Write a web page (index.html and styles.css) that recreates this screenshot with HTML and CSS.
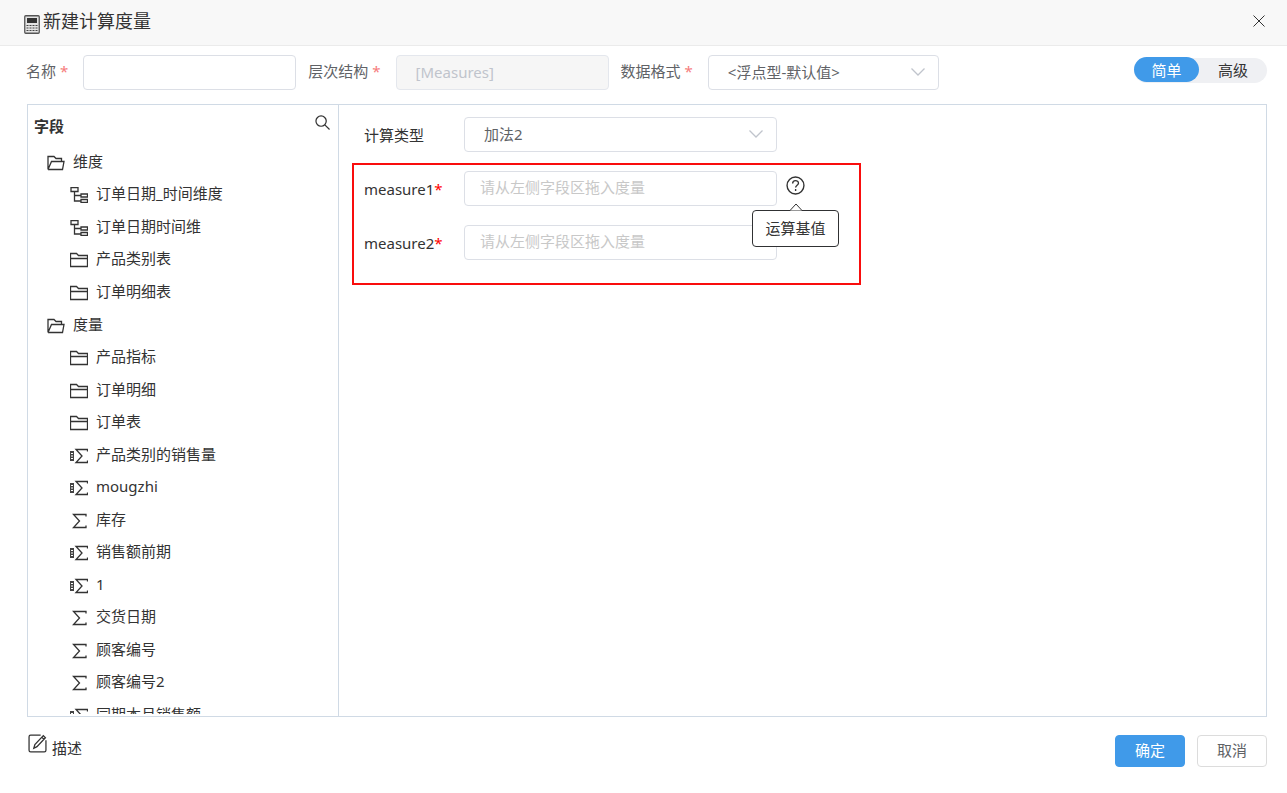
FILE: index.html
```html
<!DOCTYPE html>
<html lang="zh-CN">
<head>
<meta charset="utf-8">
<title>新建计算度量</title>
<link rel="stylesheet" href="styles.css">
</head>
<body>
<svg class="sprite" aria-hidden="true">
  <symbol id="open" viewBox="0 0 18 16"><path d="M1 14.5V1.500h6l2 2H14.500v3M1 14.500h14.500l1.500-8H4.500L1 14.500"/></symbol>
  <symbol id="folder" viewBox="0 0 18 16"><path d="M.5 14.500V1.500h6l2 2h9v11zM.5 6.500h17"/></symbol>
  <symbol id="level" viewBox="0 0 18 16"><path d="M1 .5h7v4H1zM4.500 4.500v9.500h6M4.500 8.500h6M11 7h6.500v3H11zM11 12.500h6.500v3H11z"/></symbol>
  <symbol id="sum" viewBox="0 0 18 16"><path d="M16 3.500v-2H3.500L9.500 8l-6 6.500H16v-2"/></symbol>
  <symbol id="calc-sum" viewBox="0 0 18 16"><path d="M17.500 3.500v-2H6L12 8l-6 6.500h11.500v-2"/><path class="fill" d="M0 3h4v10H0z"/><path class="dots" d="M1 5.500h2M1 8h2M1 10.500h2"/></symbol>
  <symbol id="chevron" viewBox="0 0 14 8"><path d="M.5.500 7 7 13.500.500"/></symbol>
</svg>
<main class="dialog">
  <header class="titlebar">
    <svg class="calculator" viewBox="0 0 16 19" aria-hidden="true"><rect x=".75" y=".75" width="14.500" height="17.500" rx="1" fill="#e4e4e4" stroke="#555" stroke-width="1.300"/><path d="M3 3h10v5H3z" fill="#333" stroke="none"/><path d="M2.500 10.500h11M2.500 13h11M2.500 15.500h11" stroke="#444" stroke-width="1.200" stroke-dasharray="2 1"/></svg>
    <h1 class="title">新建计算度量</h1>
    <button class="close" type="button" aria-label="关闭"><svg viewBox="0 0 12 12"><path d="M.5.500l11 11M11.500.500l-11 11"/></svg></button>
  </header>

  <form class="toolbar">
    <label class="label" for="name">名称<span class="star">*</span></label>
    <input class="control" id="name" type="text">
    <label class="label" for="hierarchy">层次结构<span class="star">*</span></label>
    <input class="control padded" id="hierarchy" type="text" value="[Measures]" disabled>
    <label class="label" for="format">数据格式<span class="star">*</span></label>
    <span class="select format">
      <select class="control padded" id="format"><option>&lt;浮点型-默认值&gt;</option></select>
      <svg class="chevron" aria-hidden="true"><use href="#chevron"/></svg>
    </span>
    <div class="modes">
      <button class="mode active" type="button" aria-pressed="true">简单</button>
      <button class="mode" type="button" aria-pressed="false">高级</button>
    </div>
  </form>

  <div class="workspace">
    <aside class="fields">
      <div class="fields-head">
        <h2 class="fields-title">字段</h2>
        <button class="search" type="button" aria-label="搜索"><svg viewBox="0 0 16 16"><circle cx="6.500" cy="6.500" r="5.500"/><path d="M10.500 10.500l5 5"/></svg></button>
      </div>
      <div class="tree">
        <div class="row root"><svg class="icon"><use href="#open"/></svg>维度</div>
        <ul class="branch">
          <li class="row"><svg class="icon"><use href="#level"/></svg>订单日期_时间维度</li>
          <li class="row"><svg class="icon"><use href="#level"/></svg>订单日期时间维</li>
          <li class="row"><svg class="icon"><use href="#folder"/></svg>产品类别表</li>
          <li class="row"><svg class="icon"><use href="#folder"/></svg>订单明细表</li>
        </ul>
        <div class="row root"><svg class="icon"><use href="#open"/></svg>度量</div>
        <ul class="branch">
          <li class="row"><svg class="icon"><use href="#folder"/></svg>产品指标</li>
          <li class="row"><svg class="icon"><use href="#folder"/></svg>订单明细</li>
          <li class="row"><svg class="icon"><use href="#folder"/></svg>订单表</li>
          <li class="row"><svg class="icon"><use href="#calc-sum"/></svg>产品类别的销售量</li>
          <li class="row"><svg class="icon"><use href="#calc-sum"/></svg>mougzhi</li>
          <li class="row"><svg class="icon"><use href="#sum"/></svg>库存</li>
          <li class="row"><svg class="icon"><use href="#calc-sum"/></svg>销售额前期</li>
          <li class="row"><svg class="icon"><use href="#calc-sum"/></svg>1</li>
          <li class="row"><svg class="icon"><use href="#sum"/></svg>交货日期</li>
          <li class="row"><svg class="icon"><use href="#sum"/></svg>顾客编号</li>
          <li class="row"><svg class="icon"><use href="#sum"/></svg>顾客编号2</li>
          <li class="row"><svg class="icon"><use href="#calc-sum"/></svg>同期本月销售额</li>
        </ul>
      </div>
    </aside>

    <section class="editor">
      <div class="field type-field">
        <label class="field-label" for="type">计算类型</label>
        <span class="select">
          <select class="control padded" id="type"><option>加法2</option></select>
          <svg class="chevron" aria-hidden="true"><use href="#chevron"/></svg>
        </span>
      </div>
      <div class="measures">
        <div class="field">
          <label class="field-label" for="measure1">measure1<span class="required">*</span></label>
          <input class="control measure" id="measure1" type="text" placeholder="请从左侧字段区拖入度量">
          <div class="help">
            <button class="help-button" type="button" aria-label="帮助" aria-describedby="tip"><svg viewBox="0 0 18 18"><circle cx="9" cy="9" r="8"/><path d="M6.300 7.100c0-3.700 5.500-3.500 5.500-.3 0 2-2.700 2-2.700 4.200M9.100 12.400v1.700"/></svg></button>
            <div class="tooltip" id="tip" role="tooltip">运算基值<svg class="arrow" viewBox="0 0 14 8"><path d="M1 7.500 7 1l6 6.500"/></svg></div>
          </div>
        </div>
        <div class="field">
          <label class="field-label" for="measure2">measure2<span class="required">*</span></label>
          <input class="control measure" id="measure2" type="text" placeholder="请从左侧字段区拖入度量">
        </div>
      </div>
    </section>
  </div>

  <footer class="footer">
    <button class="describe" type="button"><svg viewBox="0 0 18 18"><path d="M12 1H2.500A1.500 1.500 0 0 0 1 2.500v13A1.500 1.500 0 0 0 2.500 17h13a1.500 1.500 0 0 0 1.500-1.500V6M5.500 13.500l1-3.500 8-8.500 2 2-8 8.500zM13 3l2 2"/></svg><span class="describe-text">描述</span></button>
    <button class="button primary" type="button">确定</button>
    <button class="button" type="button">取消</button>
  </footer>
</main>
</body>
</html>
```
FILE: styles.css
```css
* { box-sizing: border-box; }

body {
  margin: 0;
  background: #fff;
  color: #333;
  font: 15px/20px "Noto Sans", "Noto Sans CJK SC", sans-serif;
}

svg { fill: none; stroke: #333; flex: none; }
button, input, select { font: inherit; color: inherit; }
button { padding: 0; border: 0; background: none; cursor: pointer; }
.sprite { display: none; }

.dialog {
  display: flex;
  flex-direction: column;
  height: 100vh;
  overflow: hidden;
}

.titlebar {
  display: flex;
  align-items: center;
  height: 46px;
  flex: none;
  padding: 0 22px 3px 24px;
  border-bottom: 1px solid #ebebeb;
  background: #f8f8f8;
}
.calculator { width: 16px; height: 19px; margin-top: 6px; }
.title {
  flex: 1;
  margin: 0 0 0 3px;
  font-size: 18px;
  line-height: 24px;
  font-weight: 400;
}
.close { display: flex; }
.close svg { width: 12px; height: 12px; }

.toolbar {
  display: flex;
  flex: none;
  align-items: flex-start;
  padding: 9px 20px 14px 26px;
}
.label {
  padding: 6px 15px 0 0;
  color: #606266;
  white-space: nowrap;
}
.star { margin-left: 4px; color: #f67c7c; }
.control {
  display: block;
  width: 213px;
  height: 35px;
  margin: 0 12px 0 0;
  padding: 0 15px 2px;
  border: 1px solid #dcdfe6;
  border-radius: 4px;
  background: #fff;
  color: #606266;
  outline: 0;
}
.padded { padding: 0 19px 1px; }
.measure { padding-bottom: 3px; }
.control:disabled {
  border-color: #e4e7ed;
  background: #f6f6f6;
  color: #c0c4cc;
}
.control::placeholder { color: #c8c8c8; opacity: 1; }
.select { position: relative; }
.select .control { width: 100%; margin: 0; appearance: none; }
.format { width: 231px; }
.chevron {
  position: absolute;
  top: 13px;
  right: 14px;
  width: 14px;
  height: 8px;
  stroke: #c0c4cc;
  stroke-width: 1.300;
  pointer-events: none;
}

.modes {
  display: flex;
  height: 25px;
  margin: 3px 0 0 auto;
  border-radius: 13px;
  background: #eff0f3;
}
.mode { width: 68px; height: 25px; padding-bottom: 2px; border-radius: 13px; }
.mode.active {
  width: 65px;
  margin-top: -1px;
  padding-bottom: 0;
  background: #409ae9;
  color: #fff;
}

.workspace {
  display: flex;
  flex: 1;
  min-height: 0;
  margin: 0 20px 0 27px;
  border: 1px solid #d0dae5;
}
.fields {
  display: flex;
  flex-direction: column;
  width: 311px;
  flex: none;
  padding-bottom: 2px;
  border-right: 1px solid #d0dae5;
}
.fields-head {
  display: flex;
  flex: none;
  justify-content: space-between;
  height: 39px;
  padding: 10px 8px 0 6px;
}
.fields-title { margin: 0; padding-top: 1px; font-size: 15px; line-height: 20px; font-weight: 700; }
.search { display: flex; align-self: flex-start; }
.search svg { width: 15px; height: 15px; stroke-width: 1.300; }

.tree { flex: 1; min-height: 0; overflow: hidden; }
.branch { margin: 0; padding: 0 0 0 23px; list-style: none; }
.row {
  display: flex;
  align-items: center;
  gap: 8px;
  height: 32px;
  padding-left: 19px;
  white-space: nowrap;
}
.root, .branch .row:nth-child(even) { height: 33px; }
.icon { width: 18px; height: 16px; margin-top: 4px; stroke-width: 1.300; }
.fill { fill: #444; stroke: none; }
.dots { stroke: #fff; stroke-width: 1; }

.editor { flex: 1; min-width: 0; padding: 12px 12px 0 13px; }
.field {
  display: grid;
  grid-template-columns: 100px 313px auto;
  justify-content: start;
}
.field .control { width: 100%; }
.type-field { padding-left: 12px; }
.field-label { padding-top: 8px; }
.required { color: #f00; }
.measures {
  display: grid;
  gap: 19px;
  width: 509px;
  max-width: 100%;
  margin-top: 11px;
  padding: 6px 10px 23px;
  border: 2px solid #f90d0d;
}
.help { position: relative; padding: 5px 0 0 9px; }
.help-button, .help-button svg { display: block; width: 19px; height: 19px; }
.help-button svg { stroke-width: 1.300; }
.tooltip {
  position: absolute;
  top: 39px;
  left: -25px;
  width: 87px;
  padding: 7px 0 8px;
  border: 1px solid #303133;
  border-radius: 4px;
  background: #fff;
  text-align: center;
}
.arrow {
  position: absolute;
  top: -8px;
  left: 36px;
  width: 14px;
  height: 8px;
  fill: #fff;
}

.footer {
  display: flex;
  flex: none;
  gap: 12px;
  height: 76px;
  padding: 18px 20px 0 28px;
}
.describe {
  display: flex;
  gap: 5px;
  align-self: flex-start;
  margin-right: auto;
}
.describe svg { width: 19px; height: 19px; margin-top: -1px; stroke-width: 1.200; }
.describe-text { padding-top: 3px; }
.button {
  width: 70px;
  height: 32px;
  padding-bottom: 2px;
  border: 1px solid #dcdcdc;
  border-radius: 4px;
  color: #606266;
}
.primary { border-color: #409ae9; background: #409ae9; color: #fff; }
```
